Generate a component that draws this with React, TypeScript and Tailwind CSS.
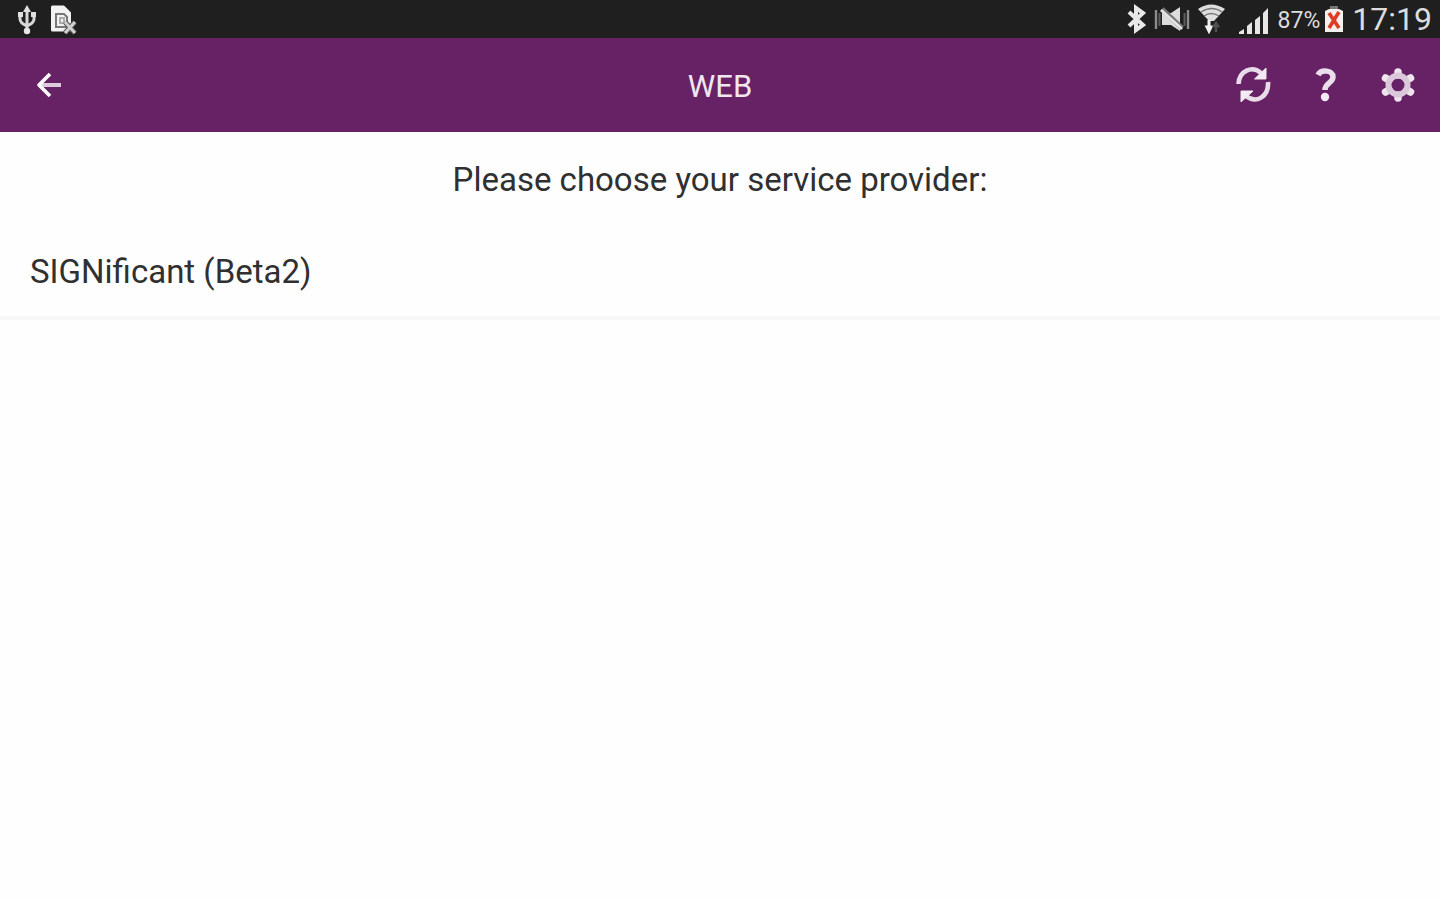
import * as React from "react";

interface IconButtonProps {
  label: string;
  children: React.ReactNode;
}

const IconButton = ({ label, children }: IconButtonProps) => (
  <button
    type="button"
    aria-label={label}
    className="flex size-10 items-center justify-center"
  >
    {children}
  </button>
);

const UsbIcon = () => (
  <svg width={20} height={30} viewBox="0 0 20 30" fill="none" stroke="#d8d8d8" strokeWidth={3}>
    <path d="M10 4v22M3 10v4q0 4 7 7q7-3 7-7v-4" />
    <path d="M10 0l4 7H6z" fill="#e0e0e0" stroke="none" />
    <path d="M1 7h5v5H1zM14 7h5v5h-5z" fill="#e0e0e0" stroke="none" />
    <circle cx={10} cy={26} r={3.2} fill="#e8e8e8" stroke="none" />
  </svg>
);

const SimErrorIcon = () => (
  <svg width={28} height={30} viewBox="0 0 28 30" fill="none">
    <path d="M3.500 2h11l6 6v17h-17z" fill="#f2f2f2" stroke="#f2f2f2" strokeWidth={3} strokeLinejoin="round" />
    <path d="M7 9h8l3 3v10H7z" stroke="#777" strokeWidth={2} />
    <path d="M11 13h4v5h-4z" stroke="#aaa" strokeWidth={2} />
    <path d="M16 17l10 11M26 17L16 28" stroke="#555" strokeWidth={5} />
    <path d="M16 17l10 11M26 17L16 28" stroke="#d0d0d0" strokeWidth={3} />
  </svg>
);

const BluetoothIcon = () => (
  <svg width={20} height={30} viewBox="0 0 20 30" fill="none" stroke="#e8e8e8" strokeWidth={4}>
    <path d="M3 8l14 13-7 5V4l7 5L3 22" />
  </svg>
);

const MuteIcon = () => (
  <svg width={36} height={26} viewBox="0 0 36 26" fill="none">
    <path d="M2 4v19M34 4v19" stroke="#8c8c8c" strokeWidth={2.400} />
    <path d="M5.500 7v13M30.500 7v13" stroke="#5c5c5c" strokeWidth={2} />
    <path d="M8 7h9l9-6v24l-9-6H8z" fill="#dcdcdc" />
    <path d="M8 3l20 19" stroke="#777" strokeWidth={5} />
    <path d="M7 4l21 19" stroke="#e4e4e4" strokeWidth={2.800} />
  </svg>
);

const WifiIcon = () => (
  <svg width={28} height={30} viewBox="0 0 28 30" fill="none">
    <path d="M0 5q13-9 27 0L16 17h-5z" fill="#dedede" />
    <path d="M3 8q11-7 21 0M6 12q7-5 15 0" stroke="#777" strokeWidth={1.400} />
    <path d="M11 16v8M9 23h4l-2 4z" stroke="#f2f2f2" strokeWidth={3} fill="#f2f2f2" />
    <path d="M18 28v-7M16 22h4l-2-3z" stroke="#505050" strokeWidth={2.400} fill="#505050" />
  </svg>
);

const SignalIcon = () => (
  <svg width={32} height={28} viewBox="0 0 32 28" fill="#e6e6e6">
    <path d="M1 27v-2l5-3v5zM9 27v-8l5-4v12zM17 27V13l5-4v18zM25 27V6l5-5v26z" />
  </svg>
);

const BatteryIcon = () => (
  <svg width={20} height={28} viewBox="0 0 20 28" fill="none">
    <path d="M6 1h8v5H6z" fill="#777" />
    <path d="M1 6l4-2h10l4 2v21H1z" fill="#f4f0ee" />
    <path d="M5 8l10 15M15 7L5 23" stroke="#de3a24" strokeWidth={3.600} />
  </svg>
);

const BackIcon = () => (
  <svg width={28} height={28} viewBox="0 0 28 28" fill="none" strokeWidth={3.600}>
    <path d="M5 14h21" stroke="#dccbdc" strokeWidth={4} />
    <path d="M15 3L4 14l11 11" stroke="#fff" strokeLinejoin="round" />
  </svg>
);

const RefreshIcon = () => (
  <svg width={38} height={38} viewBox="0 0 38 38" fill="none">
    <path d="M3.500 18C4 5 17-1 26 7M33 16c1 15-12 22-22 14" stroke="#e9dce9" strokeWidth={4.600} />
    <path d="M31 2v11H19.500zM6 36V25h12z" fill="#f3eaf3" stroke="#f3eaf3" strokeLinejoin="round" />
  </svg>
);

const HelpIcon = () => (
  <svg width={22} height={34} viewBox="0 0 22 34" fill="none">
    <path d="M3 7c3-6 15-5 15 2 0 6-8 6-8 13" stroke="#eadeea" strokeWidth={5.500} />
    <circle cx={10} cy={29} r={4.200} fill="#f3ebf3" />
  </svg>
);

const GearIcon = () => (
  <svg width={36} height={36} viewBox="-18 -18 36 36" fill="none">
    <g stroke="#efe5ef" strokeWidth={7.500} strokeLinecap="round">
      <path d="M0-10v-3M0 10v3M9-5l3.500-2M-9 5l-3.500 2M9 5l3.500 2M-9-5l-3.500-2" />
    </g>
    <circle r={9.500} stroke="#dbc8db" strokeWidth={6} />
  </svg>
);

const StatusBar = () => (
  <div className="flex h-[38px] items-center justify-between bg-[#1f1f1f] pr-2 pl-[17px] text-[#dcdcdc]">
    <div className="flex items-center gap-3 pt-0.5">
      <UsbIcon />
      <SimErrorIcon />
    </div>
    <div className="flex items-center">
      <div className="flex items-center gap-2">
        <BluetoothIcon />
        <MuteIcon />
        <WifiIcon />
      </div>
      <div className="ml-3 flex items-center gap-2 pt-1">
        <SignalIcon />
        <span className="text-[23px] leading-8">87%</span>
      </div>
      <div className="ml-1 flex items-center gap-2">
        <BatteryIcon />
        <span className="text-[32px] leading-8">17:19</span>
      </div>
    </div>
  </div>
);

const Header = () => (
  <header className="grid h-[94px] grid-cols-[1fr_auto_1fr] items-center bg-[#672165] px-[22px]">
    <div className="pl-[7px]">
      <IconButton label="Back">
        <BackIcon />
      </IconButton>
    </div>
    <h1 className="pt-1 text-[31px] leading-10 text-[#f0e6f0]">WEB</h1>
    <div className="flex items-center justify-end gap-8">
      <IconButton label="Refresh">
        <RefreshIcon />
      </IconButton>
      <IconButton label="Help">
        <HelpIcon />
      </IconButton>
      <IconButton label="Settings">
        <GearIcon />
      </IconButton>
    </div>
  </header>
);

const providers = ["SIGNificant (Beta2)"];

const App = () => (
  <div className="min-h-screen bg-[#fefefe] font-[Roboto,sans-serif] text-[#303030]">
    <StatusBar />
    <Header />
    <main>
      <h2 className="py-7 text-center text-[33px] leading-10">
        Please choose your service provider:
      </h2>
      <ul>
        {providers.map((provider) => (
          <li key={provider} className="border-b-4 border-[#f8f8f8]">
            <button type="button" className="block w-full px-[30px] py-6 text-left text-[33px] leading-10">
              {provider}
            </button>
          </li>
        ))}
      </ul>
    </main>
  </div>
);

export default App;
